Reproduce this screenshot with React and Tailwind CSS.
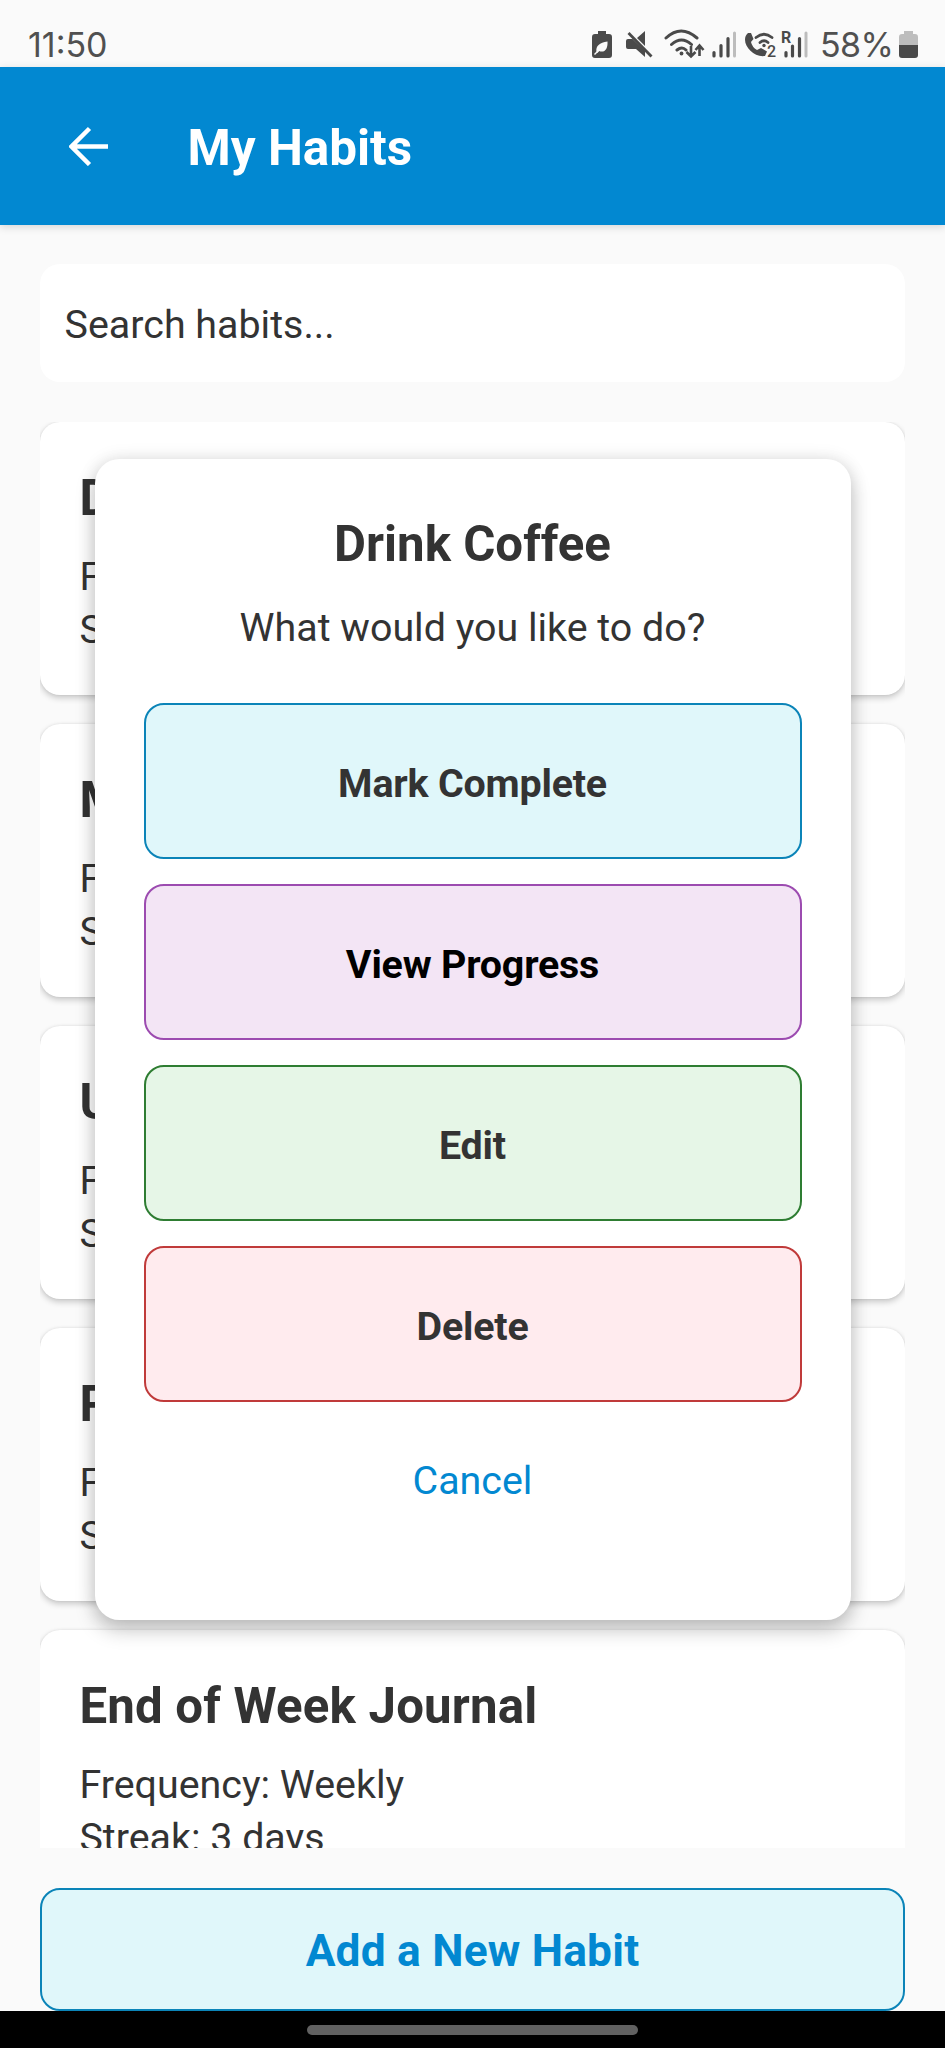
const HABITS = [
  { name: "Drink Coffee", frequency: "Daily", streak: "1 days" },
  { name: "Meditate", frequency: "Daily", streak: "2 days" },
  { name: "Unwind", frequency: "Daily", streak: "1 days" },
  { name: "Read", frequency: "Daily", streak: "1 days" },
  { name: "End of Week Journal", frequency: "Weekly", streak: "3 days" },
];

const ACTIONS = [
  { label: "Mark Complete", style: "border-[#0b84b8] bg-[#e0f7fa] text-[#333333]" },
  { label: "View Progress", style: "border-[#9c4bb0] bg-[#f3e5f5] text-black" },
  { label: "Edit", style: "border-[#2e7d32] bg-[#e6f6e7] text-[#333333]" },
  { label: "Delete", style: "border-[#c03a3a] bg-[#ffebee] text-[#333333]" },
];

function StatusIcons() {
  return (
    <svg width="308" height="34" viewBox="590 27 308 34" fill="none" stroke="#4a4a4a" className="block">
      {/* power saving battery */}
      <path d="M598 31h8v3h3q3 0 3 3v18q0 3-3 3h-14q-3 0-3-3v-18q0-3 3-3h3z" fill="#4a4a4a" stroke="none" />
      <path d="M596.500 52c-1-6 3-9.500 11-10.500c.500 8-3 11.500-8.500 9.500l-1.500 2z" fill="#fafafa" stroke="none" />
      <path d="M594.500 54.500l7-7" stroke="#fafafa" strokeWidth="1.400" />
      {/* muted speaker */}
      <path d="M645 31v15l-8-8zM628 39h4.500l12.500 12v6l-9-8h-8q-2 0-2-2v-6q0-2 2-2z" fill="#4a4a4a" stroke="none" />
      <path d="M628.500 33l23 23.500" strokeWidth="2.800" />
      {/* wifi with data arrows */}
      <path d="M666 38q15-14 31 0M671.500 44.500q10-9 20 0M677 50q5-4 9 0" strokeWidth="3" strokeLinecap="round" />
      <circle cx="681.500" cy="53.500" r="1.900" fill="#4a4a4a" stroke="none" />
      <path d="M691 46v10m-4.500-4l4.500 4.500l4.500-4.500M699.500 56v-10m-4 4l4-4.500l4 4.500" strokeWidth="2.600" />
      {/* first signal */}
      <path d="M714 52.500v3.500M721 45.500v10.500M728 38.500v17.500" strokeWidth="3.200" strokeLinecap="round" />
      <path d="M734.500 33v23" stroke="#bdbdbd" strokeWidth="3" strokeLinecap="round" />
      {/* wifi calling */}
      <path d="M748 33c-9 8 4 25 17 23l2-4.500l-6-3.500l-4 2q-5-3-6-8l2.500-3l-2.500-6z" fill="#4a4a4a" stroke="none" />
      <path d="M756 37.500q8-6.500 16 0M760 42.500q4-3.500 8 0" strokeWidth="2.800" strokeLinecap="round" />
      <circle cx="764" cy="45.500" r="1.700" fill="#4a4a4a" stroke="none" />
      <text x="767" y="56.500" fontSize="16" fontFamily="Roboto, sans-serif" fontWeight="500" fill="#4a4a4a" stroke="none">2</text>
      {/* roaming signal */}
      <text x="781" y="43" fontSize="16" fontFamily="Roboto, sans-serif" fontWeight="700" fill="#4a4a4a" stroke="none">R</text>
      <path d="M786 52.500v3.500M792.500 46v10M799.500 38.500v17.500" strokeWidth="3.200" strokeLinecap="round" />
      <path d="M806 33v23" stroke="#bdbdbd" strokeWidth="3" strokeLinecap="round" />
    </svg>
  );
}

function BatteryLevel() {
  return (
    <svg width="19" height="34" viewBox="899 27 19 34" className="block shrink-0">
      <path d="M904 31h9v3h2q3 0 3 3v8h-19v-8q0-3 3-3h2z" fill="#bdbdbd" />
      <path d="M899 45h19v10q0 3-3 3h-13q-3 0-3-3z" fill="#4a4a4a" />
    </svg>
  );
}

function HabitCard({ habit }) {
  return (
    <article className="h-[273px] shrink-0 rounded-[20px] bg-white px-[39.400px] pt-[47px] text-[#333333] shadow-[0_3px_6px_rgba(0,0,0,0.2),0_0_3px_rgba(0,0,0,0.08)]">
      <h2 className="text-[49.200px] leading-[58px] font-bold tracking-[0.2px]">{habit.name}</h2>
      <p className="mt-[23px] text-[39.400px] leading-[53.500px]">Frequency: {habit.frequency}</p>
      <p className="text-[39.400px] leading-[53.500px]">Streak: {habit.streak}</p>
    </article>
  );
}

function HabitDialog() {
  return (
    <div className="absolute top-[458.500px] left-[94.500px] flex h-[1161.500px] w-[756px] flex-col rounded-[24.600px] bg-white px-[49px] pt-[56px] text-center shadow-[0_10px_20px_rgba(0,0,0,0.22),0_0_18px_rgba(0,0,0,0.1)]">
      <h2 className="text-[49.200px] leading-[58px] font-bold text-[#333333]">Drink Coffee</h2>
      <p className="mt-[32px] text-[39.400px] leading-[46px] text-[#333333]">What would you like to do?</p>
      <div className="mt-[52px] flex flex-col gap-[24.600px]">
        {ACTIONS.map((action) => (
          <button key={action.label} className={`h-[156.500px] rounded-[20px] border-2 pt-[5px] text-[39.400px] font-bold tracking-[-0.2px] ${action.style}`}>
            {action.label}
          </button>
        ))}
      </div>
      <button className="mt-[56px] text-[39.400px] leading-[46px] text-[#0288d1]">Cancel</button>
    </div>
  );
}

export default function App() {
  return (
    <div className="relative flex h-[2048px] w-[945px] flex-col overflow-hidden bg-[#fafafa] font-[Roboto,sans-serif]">
      <div className="flex h-[67px] shrink-0 items-start pt-[27px] pl-[28px] font-[Inter,sans-serif] text-[34px] leading-[36px] font-normal text-[#505050]">
        <span className="tracking-[0px]">11:50</span>
        <div className="mr-[27px] ml-auto flex">
          <div className="w-[230px]">
            <StatusIcons />
          </div>
          <span className="mr-[4px] w-[75px] tracking-[-0.6px]">58%</span>
          <BatteryLevel />
        </div>
      </div>
      <header className="flex h-[158px] shrink-0 items-center gap-[78.500px] bg-[#0288d1] pl-[69px] text-white shadow-[0_2px_8px_rgba(0,0,0,0.15)]">
        <svg width="40" height="40" viewBox="0 0 40 40" fill="none" stroke="currentColor" strokeWidth="4.500" className="block">
          <path d="M39 20.500H3M20.500 2.500L2.500 20.500l18 18" />
        </svg>
        <h1 className="pt-[4px] text-[49.400px] leading-[58px] font-bold">My Habits</h1>
      </header>
      <main className="flex min-h-0 flex-1 flex-col px-[40px] pt-[39px]">
        <div className="flex h-[118px] shrink-0 items-center rounded-[20px] bg-white px-[24.600px] pt-[3px] text-[39.400px] text-[#333333]">Search habits...</div>
        <div className="mt-[39.500px] flex h-[1426px] shrink-0 flex-col gap-[29px] overflow-hidden">
          {HABITS.map((habit) => (
            <HabitCard key={habit.name} habit={habit} />
          ))}
        </div>
        <button className="mt-[40px] h-[123.500px] shrink-0 rounded-[20px] border-2 border-[#0b84b8] bg-[#e0f7fa] pt-[4px] text-[44.300px] font-bold tracking-[0.200px] text-[#0288d1]">Add a New Habit</button>
      </main>
      <footer className="flex h-[37px] shrink-0 justify-center bg-black pt-[14px]">
        <div className="h-[10px] w-[331px] rounded-full bg-[#616161]" />
      </footer>
      <HabitDialog />
    </div>
  );
}
